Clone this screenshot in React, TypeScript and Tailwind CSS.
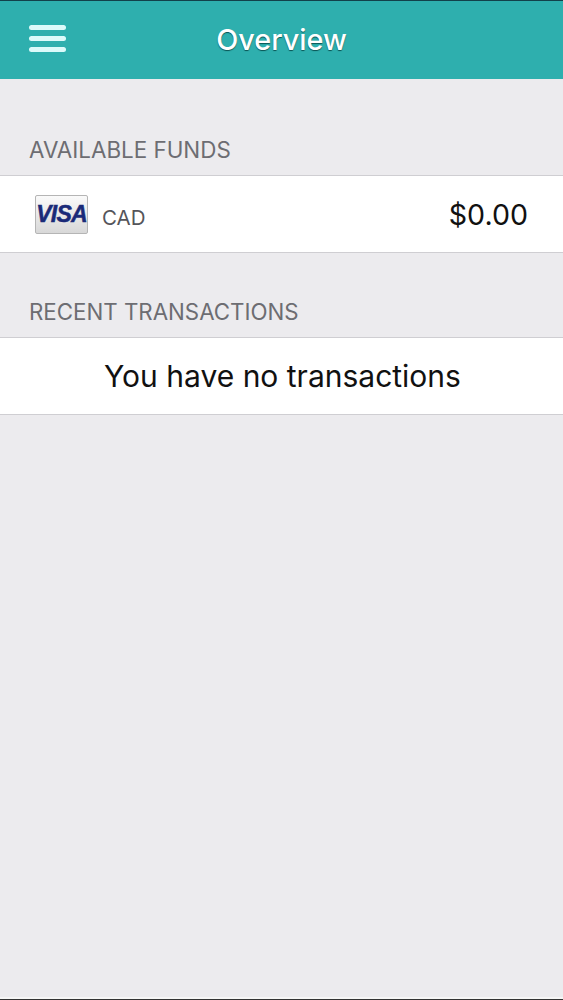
export default function App() {
  return (
    <div className="flex flex-col h-[1000px] w-[563px] overflow-hidden bg-[#ecebee] font-['Inter','Liberation_Sans',sans-serif]">
      <header className="relative flex h-[79px] shrink-0 items-center justify-center border-t border-t-[#12414a] bg-[#2eafae]">
        <div className="absolute left-[29px] top-[23.5px] flex flex-col gap-[5.5px]">
          <span className="block h-[5.5px] w-[37px] rounded-full bg-[#dcfafa]" />
          <span className="block h-[5.5px] w-[37px] rounded-full bg-[#dcfafa]" />
          <span className="block h-[5.5px] w-[37px] rounded-full bg-[#dcfafa]" />
        </div>
        <h1 className="text-[28.8px] leading-none font-medium text-white [text-shadow:0_1px_1px_rgba(0,60,60,0.8)] font-['Inter','Liberation_Sans',sans-serif]">Overview</h1>
      </header>

      <div className="flex h-[96px] shrink-0 items-end pb-[14px] pl-[29px] text-[22.4px] leading-none text-[#6d6d72]">AVAILABLE FUNDS</div>
      <div className="flex h-[78px] shrink-0 items-center border-y border-[#cfced2] bg-white pl-[35px] pr-[35px]">
        <div className="flex h-[39px] w-[53px] items-center justify-center rounded-[2px] border border-[#b5b5b5] bg-gradient-to-b from-[#fafafa] to-[#d8d8d8]">
          <span className="text-[23px] leading-none font-black italic tracking-[-0.8px] text-[#1a2a78] [-webkit-text-stroke:0.5px_#1a2a78] font-['Liberation_Sans',sans-serif]">VISA</span>
        </div>
        <span className="ml-[14px] mt-[8px] text-[20.5px] leading-none text-[#55555a]">CAD</span>
        <span className="ml-auto mt-[2px] text-[28.6px] leading-none text-[#111111]">$0.00</span>
      </div>

      <div className="flex h-[84px] shrink-0 items-end pb-[14px] pl-[29px] text-[22.3px] leading-none text-[#6d6d72]">RECENT TRANSACTIONS</div>
      <div className="flex h-[78px] shrink-0 items-center justify-center border-y border-[#cfced2] bg-white pl-[2px] text-[30px] leading-none text-[#111111]">You have no transactions</div>

      <div className="flex-1" />
      <div className="h-[2px] shrink-0 bg-[#f6f6f6]" />
      <div className="h-[1px] shrink-0 bg-[#333333]" />
    </div>
  );
}
